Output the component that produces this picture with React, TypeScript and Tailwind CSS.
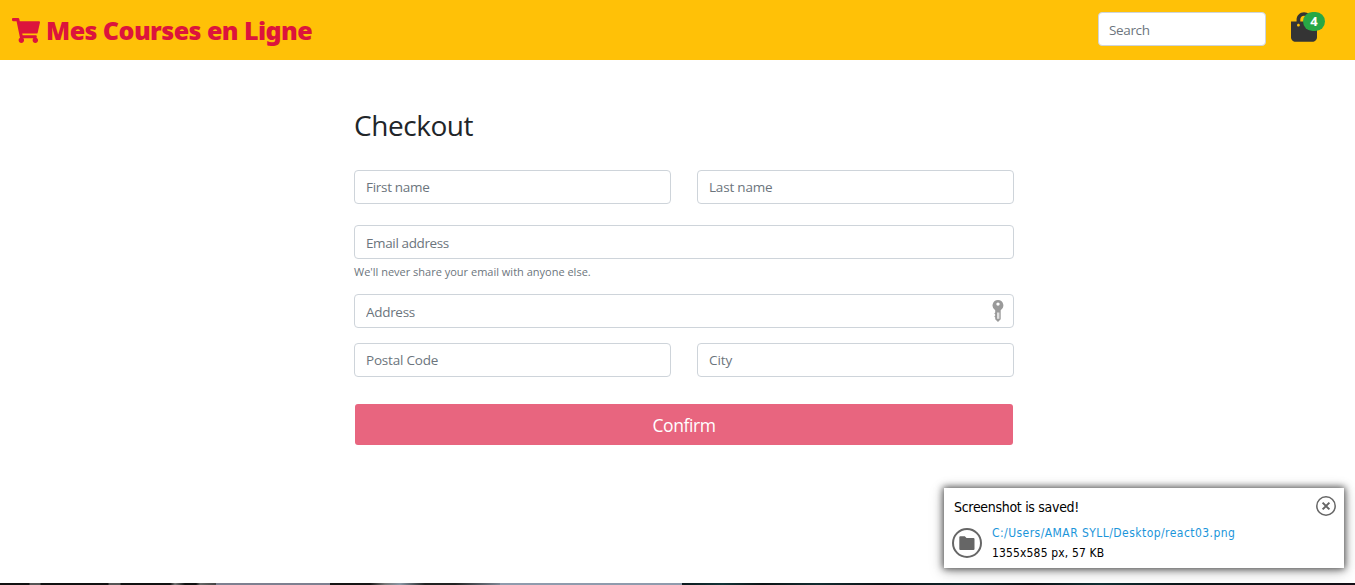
import React from "react";
import { FaShoppingCart, FaShoppingBag } from "react-icons/fa";

type FieldProps = { placeholder: string; className?: string };

function Field({ placeholder, className = "px-[11px] tracking-[-0.3px]" }: FieldProps) {
  return (
    <input
      type="text"
      placeholder={placeholder}
      aria-label={placeholder}
      className={`block h-[34px] w-full rounded border border-[#ced4da] bg-white text-[13.5px] text-[#495057] placeholder:text-[#6c757d] placeholder:opacity-100 ${className}`}
    />
  );
}

function KeyIcon() {
  return (
    <svg viewBox="0 0 12 22" className="h-[22px] w-3">
      <path
        fillRule="evenodd"
        fill="#9a9a9a"
        d="M6 0a5.5 5.5 0 0 0-2.8 10.2V12.5l-.9.9.9 1v1.2l-.9.9.9 1v1.7L6 22l2.7-2.8v-9A5.5 5.5 0 0 0 6 0Zm0 2.4a1.7 1.7 0 1 1 0 3.4 1.7 1.7 0 0 1 0-3.4Z"
      />
      <path fill="#e0e0e0" d="M5 12.5h2.4v6.3H5z" />
    </svg>
  );
}

function Toast() {
  return (
    <aside className="absolute left-[944px] top-[488px] flex h-20 w-[400px] flex-col bg-white pl-2 pr-2 pt-2 font-['DejaVu_Sans_Condensed','DejaVu_Sans',sans-serif] shadow-[0_0_7px_1px_rgba(0,0,0,0.65),0_3px_14px_rgba(0,0,0,0.25)]">
      <div className="flex justify-between">
        <p className="ml-[2px] mt-[1px] whitespace-nowrap text-[14px] leading-5 tracking-[-0.3px] text-black">
          Screenshot is saved!
        </p>
        <svg viewBox="0 0 20 20" className="h-5 w-5" fill="none" stroke="#666">
          <circle cx="10" cy="10" r="9.2" strokeWidth="1.5" />
          <path d="m6.6 6.6 6.8 6.8m0-6.8-6.8 6.8" strokeWidth="2" />
        </svg>
      </div>
      <div className="mt-[5px] flex">
        <svg viewBox="0 0 30 30" className="mt-[6px] h-[30px] w-[30px]">
          <circle cx="15" cy="15" r="14" fill="none" stroke="#666" strokeWidth="2" />
          <path
            fill="#666"
            d="M7.3 9.2q0-1 1-1h4.5l1.7 1.9h7q1 0 1 1v10q0 1-1 1H8.3q-1 0-1-1Z"
          />
        </svg>
        <div className="ml-[10px] mt-[1px] whitespace-nowrap text-[12px] leading-5">
          <p className="tracking-[0.45px] text-[#1b95da]">C:/Users/AMAR SYLL/Desktop/react03.png</p>
          <p className="tracking-[0.15px] text-black">1355x585 px, 57 KB</p>
        </div>
      </div>
    </aside>
  );
}

export default function App() {
  return (
    <div className="relative flex h-[585px] w-[1355px] flex-col overflow-hidden bg-white font-['Open_Sans','Noto_Sans',sans-serif]">
      <header className="flex h-[60px] shrink-0 items-center bg-[#ffc107]">
        <a className="flex items-center text-[#dc143c]">
          <FaShoppingCart className="ml-3 mt-px h-[25px] w-7" />
          <span className="ml-[6px] whitespace-nowrap font-['Noto_Sans'] text-[25px] font-black leading-8 tracking-[-0.55px]">
            Mes Courses en Ligne
          </span>
        </a>
        <div className="mb-[2px] ml-auto w-[168px]">
          <Field placeholder="Search" className="px-[10px] pt-[2px] tracking-[-0.35px]" />
        </div>
        <div className="relative ml-[25px] mr-[38px] mt-[-6px] h-[30px] w-[26px]">
          <FaShoppingBag className="h-[30px] w-[26px] text-[#343434]" />
          <span className="absolute left-3 top-0 flex h-[19px] w-[22px] items-center justify-center rounded-full bg-[#28a745] text-[13px] font-bold leading-none text-white">
            4
          </span>
        </div>
      </header>

      <main className="ml-[354px] flex w-[660px] flex-1 flex-col">
        <h1 className="mt-[47px] h-9 whitespace-nowrap text-[28px] leading-9 tracking-[-0.45px] text-[#212529]">
          Checkout
        </h1>
        <form className="mt-[27px] flex flex-col">
          <div className="grid grid-cols-2 gap-[26px]">
            <Field placeholder="First name" />
            <Field placeholder="Last name" className="px-[11px] tracking-[-0.2px]" />
          </div>
          <Field placeholder="Email address" className="mt-[21px] px-[11px] pt-[2px] tracking-[-0.38px]" />
          <small className="mt-[5px] h-4 whitespace-nowrap text-[11px] leading-4 text-[#6c757d]">
            We'll never share your email with anyone else.
          </small>
          <div className="relative mt-[14px]">
            <Field placeholder="Address" className="px-[11px] pt-[2px] tracking-[-0.3px]" />
            <span className="absolute right-[10px] top-[6px]">
              <KeyIcon />
            </span>
          </div>
          <div className="mt-[15px] grid grid-cols-2 gap-[26px]">
            <Field placeholder="Postal Code" className="px-[11px] tracking-[-0.2px]" />
            <Field placeholder="City" className="px-[11px] tracking-[-0.1px]" />
          </div>
          <button
            type="button"
            className="mx-px mt-[27px] h-[41px] rounded-[3px] bg-[#e8657f] pt-[2px] text-[17.5px] tracking-[-0.4px] text-white"
          >
            Confirm
          </button>
        </form>
      </main>

      <Toast />

      <footer className="flex h-[2px] shrink-0">
        <div className="w-[216px] bg-[linear-gradient(90deg,#111_0_29px,#555_30px_40px,#111_41px_108px,#555_109px_120px,#111_121px_170px,#777_175px,#111_185px_196px,#666_200px,#444_216px)]" />
        <div className="w-[114px] bg-[#7e8090]" />
        <div className="w-[170px] bg-[linear-gradient(90deg,#171515_0_40px,#777_55px,#8a97a5_70px,#222_95px_125px,#7e8795_170px)]" />
        <div className="w-[182px] bg-[#8f9bad]" />
        <div className="flex-1 bg-[linear-gradient(90deg,#0d1a1e,#123337_6%,#0c1214_12%,#122c30_20%,#0d1115_30%,#10282c_42%,#0d1014_52%,#113034_62%,#0c1518_75%,#150f17)]" />
      </footer>
    </div>
  );
}
